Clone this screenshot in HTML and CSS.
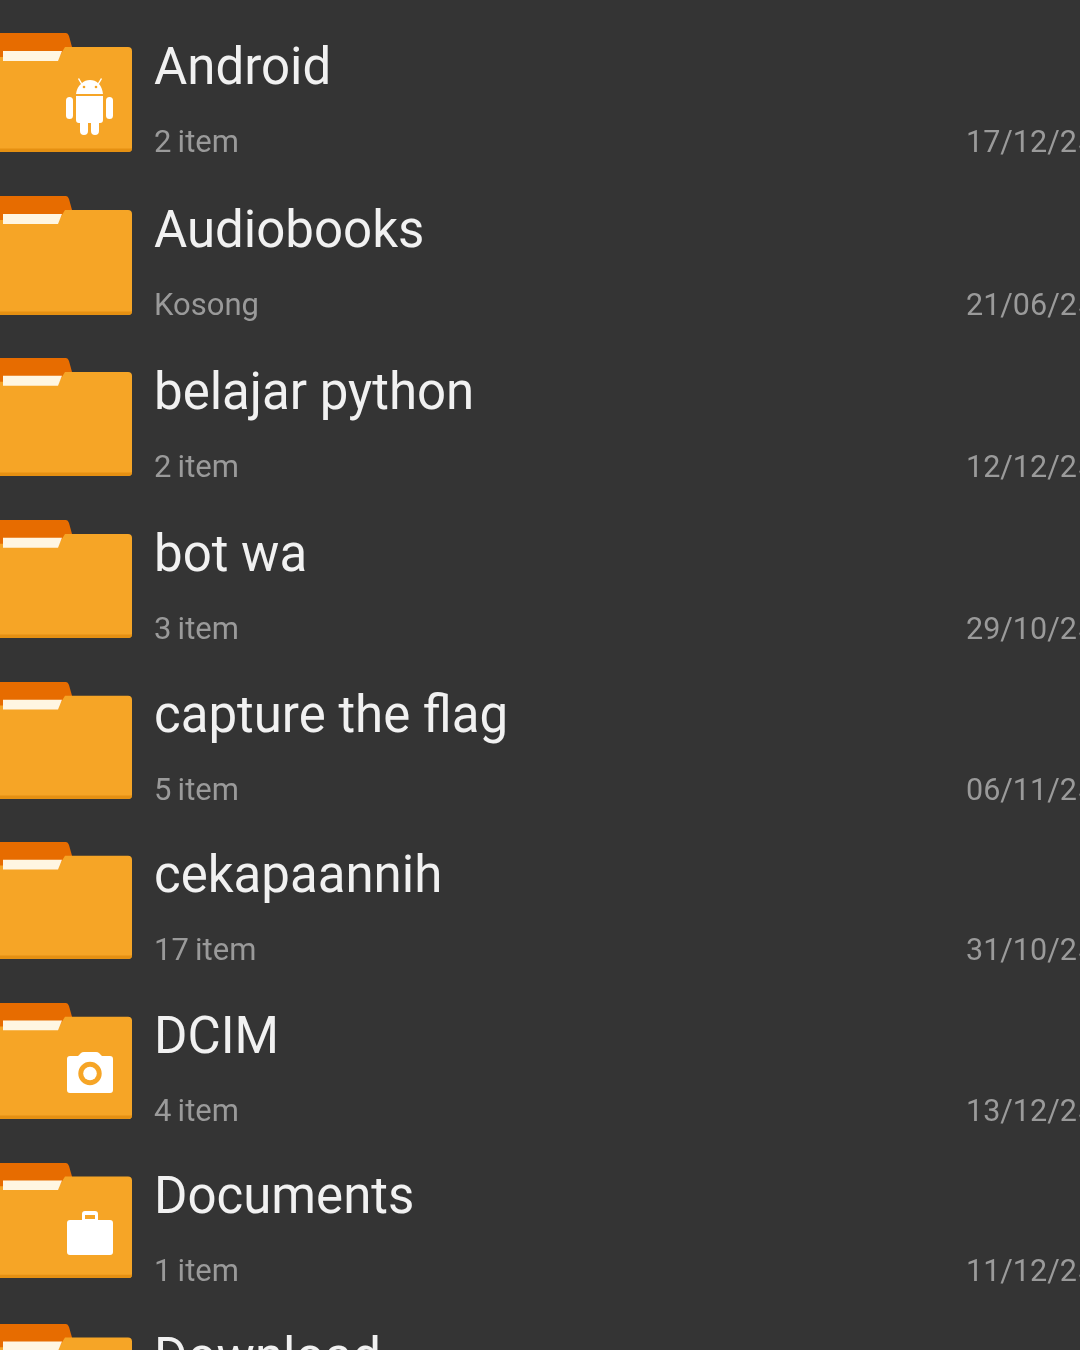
FILE: index.html
```html
<!DOCTYPE html>
<html lang="id">
<head>
<meta charset="utf-8">
<title>File</title>
<link rel="stylesheet" href="styles.css">
</head>
<body>
<svg class="defs" width="0" height="0" aria-hidden="true">
  <symbol id="folder" viewBox="0 0 132 120" preserveAspectRatio="none">
    <path fill="#e76c00" d="M0 0H66Q68 0 69 3L72 14V30H0Z"/>
    <path fill="#f6a526" d="M0 24H59L65 14H128Q132 14 132 18V115Q132 119 128 119H0Z"/>
    <path fill="#e59012" d="M0 115.500H132V116Q132 119 128 119H0Z"/>
    <path fill="#fff6e2" d="M3 18H62L58 28H3Z"/>
  </symbol>
  <symbol id="android" viewBox="0 0 132 120" preserveAspectRatio="none">
    <path fill="#fff" d="M79 45l3 5Q85 47 90 47T98 50l3-5 1 1-3 5Q102 54 103 61H76Q77 54 81 51l-3-5Z"/>
    <path fill="#fff" d="M76 63H103V87Q103 90 100 90H99V98a4 4 0 0 1-8 0V90H88V98a4 4 0 0 1-8 0V90H79Q76 90 76 87Z"/>
    <rect fill="#fff" x="66" y="64" width="7" height="22" rx="3.5"/>
    <rect fill="#fff" x="106" y="64" width="7" height="22" rx="3.5"/>
    <circle fill="#f6a526" cx="84" cy="54" r="1.3"/>
    <circle fill="#f6a526" cx="96" cy="54" r="1.3"/>
  </symbol>
  <symbol id="camera" viewBox="0 0 132 117" preserveAspectRatio="none">
    <path fill="#fff" fill-rule="evenodd" d="M70 53H78L81 50Q82 49 84 49H96Q98 49 99 50L102 53H110Q113 53 113 56V87Q113 90 110 90H70Q67 90 67 87V56Q67 53 70 53ZM90 58.800a11.700 11.700 0 1 0 0 23.400 11.700 11.700 0 0 0 0-23.400Z"/>
    <circle fill="#fff" cx="90" cy="70.500" r="6.800"/>
  </symbol>
  <symbol id="briefcase" viewBox="0 0 132 116" preserveAspectRatio="none">
    <path fill="#fff" fill-rule="evenodd" d="M70 57H82V51Q82 48 85 48H95Q98 48 98 51V57H110Q113 57 113 60V89Q113 92 110 92H70Q67 92 67 89V60Q67 57 70 57ZM85 52V56H95V52Z"/>
  </symbol>
</svg>
<main class="list">
  <article class="row row-wide">
    <svg class="folder"><use href="#folder"/><use href="#android"/></svg>
    <div class="info"><h2 class="name">Android</h2><p class="meta">2 item</p></div>
    <time class="date">17/12/25</time>
  </article>
  <article class="row row-wide">
    <svg class="folder"><use href="#folder"/></svg>
    <div class="info"><h2 class="name">Audiobooks</h2><p class="meta">Kosong</p></div>
    <time class="date">21/06/25</time>
  </article>
  <article class="row row-wide">
    <svg class="folder folder-119"><use href="#folder"/></svg>
    <div class="info"><h2 class="name">belajar python</h2><p class="meta">2 item</p></div>
    <time class="date">12/12/25</time>
  </article>
  <article class="row row-wide">
    <svg class="folder folder-119"><use href="#folder"/></svg>
    <div class="info"><h2 class="name">bot wa</h2><p class="meta">3 item</p></div>
    <time class="date">29/10/25</time>
  </article>
  <article class="row">
    <svg class="folder folder-118"><use href="#folder"/></svg>
    <div class="info"><h2 class="name">capture the flag</h2><p class="meta">5 item</p></div>
    <time class="date">06/11/25</time>
  </article>
  <article class="row">
    <svg class="folder folder-118"><use href="#folder"/></svg>
    <div class="info"><h2 class="name">cekapaannih</h2><p class="meta">17 item</p></div>
    <time class="date">31/10/25</time>
  </article>
  <article class="row">
    <svg class="folder folder-117"><use href="#folder"/><use href="#camera"/></svg>
    <div class="info"><h2 class="name">DCIM</h2><p class="meta">4 item</p></div>
    <time class="date">13/12/25</time>
  </article>
  <article class="row">
    <svg class="folder folder-116"><use href="#folder"/><use href="#briefcase"/></svg>
    <div class="info"><h2 class="name">Documents</h2><p class="meta">1 item</p></div>
    <time class="date">11/12/25</time>
  </article>
  <article class="row">
    <svg class="folder folder-116"><use href="#folder"/></svg>
    <div class="info"><h2 class="name">Download</h2><p class="meta">9 item</p></div>
    <time class="date">14/12/25</time>
  </article>
</main>
</body>
</html>
```
FILE: styles.css
```css
* { box-sizing: border-box; }
html, body {
  margin: 0;
  height: 1350px;
  overflow: hidden;
  background: #343434;
}
body { font-family: Roboto, "Noto Sans", sans-serif; }
.defs { position: absolute; }
.list {
  display: flex;
  flex-direction: column;
  padding-top: 33px;
  filter: blur(0.5px);
}
.row {
  display: grid;
  grid-template-columns: 155px 812px 1fr;
  flex: 0 0 auto;
  height: 160.4px;
  white-space: nowrap;
}
.row-wide { height: 162px; }
.row-wide:first-child { height: 163px; }
.folder { width: 132px; height: 120px; display: block; }
.folder-119 { height: 119px; }
.folder-118 { height: 118px; }
.folder-117 { height: 117px; }
.folder-116 { height: 116px; }
.info {
  display: flex;
  flex-direction: column;
  margin-top: 3px;
  margin-left: -1px;
}
.row-wide .info { margin-top: 4px; }
.name {
  margin: 0;
  font-size: 51px;
  font-weight: 400;
  line-height: 60px;
  color: #f1f1f1;
}
.meta {
  margin: 0;
  padding-top: 26px;
  font-size: 31px;
  word-spacing: -1.5px;
  line-height: 38px;
  color: #9a9a9a;
}
.date {
  margin-top: 89px;
  margin-left: -1px;
  font-size: 30.5px;
  line-height: 38px;
  color: #9a9a9a;
}
.row-wide .date { margin-top: 90px; }
```
